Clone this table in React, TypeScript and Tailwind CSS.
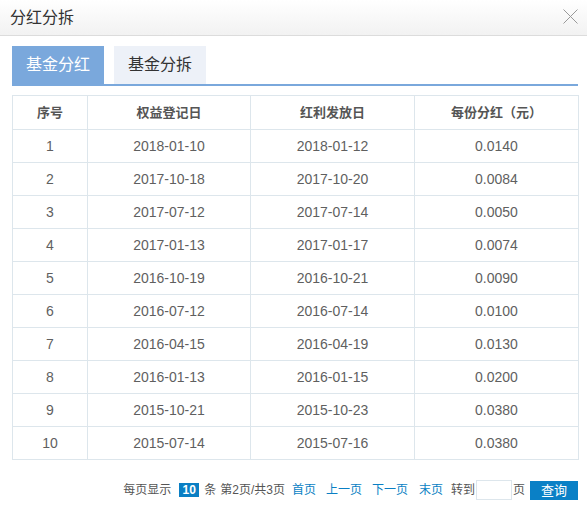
const rows = [
  ['1', '2018-01-10', '2018-01-12', '0.0140'],
  ['2', '2017-10-18', '2017-10-20', '0.0084'],
  ['3', '2017-07-12', '2017-07-14', '0.0050'],
  ['4', '2017-01-13', '2017-01-17', '0.0074'],
  ['5', '2016-10-19', '2016-10-21', '0.0090'],
  ['6', '2016-07-12', '2016-07-14', '0.0100'],
  ['7', '2016-04-15', '2016-04-19', '0.0130'],
  ['8', '2016-01-13', '2016-01-15', '0.0200'],
  ['9', '2015-10-21', '2015-10-23', '0.0380'],
  ['10', '2015-07-14', '2015-07-16', '0.0380'],
];

const headers = ['序号', '权益登记日', '红利发放日', '每份分红（元）'];

export default function App() {
  return (
    <div className="w-[587px] h-[505px] overflow-hidden bg-white font-['Liberation_Sans','Noto_Sans_CJK_SC',sans-serif]">
      <div className="h-[36px] border-b border-[#dcdcdc] bg-gradient-to-b from-white to-[#f2f2f2] flex items-center justify-between pl-[10px] pr-[9px]">
        <span className="text-[16px] text-[#333]">分红分拆</span>
        <svg width="15" height="15" viewBox="0 0 15 15" className="mb-[2px]">
          <path d="M0.5 0.5 L14.5 14.5 M14.5 0.5 L0.5 14.5" stroke="#999" strokeWidth="1" fill="none" />
        </svg>
      </div>

      <div className="pl-3 pr-[9px] pt-[10px]">
        <div className="flex gap-[10px] border-b-2 border-[#7aa8dc]">
          <button className="h-[38px] px-[14px] text-[16px] bg-[#7aa8dc] text-white">基金分红</button>
          <button className="h-[38px] px-[14px] text-[16px] bg-[#edf1f8] text-[#333]">基金分拆</button>
        </div>

        <table className="mt-[9px] w-[566px] border-collapse table-fixed text-center">
          <colgroup>
            <col className="w-[75px]" />
            <col className="w-[163px]" />
            <col className="w-[164px]" />
            <col className="w-[164px]" />
          </colgroup>
          <thead>
            <tr className="h-[34px]">
              {headers.map((h) => (
                <th key={h} className="border border-[#dde6ec] text-[13px] font-bold text-[#555]">
                  {h}
                </th>
              ))}
            </tr>
          </thead>
          <tbody>
            {rows.map((row) => (
              <tr key={row[0]} className="h-[33px]">
                {row.map((cell, i) => (
                  <td key={i} className="border border-[#dde6ec] text-[14px] text-[#5f5f5f]">
                    {cell}
                  </td>
                ))}
              </tr>
            ))}
          </tbody>
        </table>

        <div className="mt-[20px] flex items-center justify-end text-[12px] text-[#555] h-[20px]">
          <span>每页显示</span>
          <span className="ml-[8px] bg-[#0a7fc4] text-white font-bold h-[14px] leading-[14px] w-[20px] text-center">10</span>
          <span className="ml-[5px]">条</span>
          <span className="ml-[4px]">第2页/共3页</span>
          <a className="ml-[7px] text-[#0a7fc4]">首页</a>
          <a className="ml-[10px] text-[#0a7fc4]">上一页</a>
          <a className="ml-[10px] text-[#0a7fc4]">下一页</a>
          <a className="ml-[11px] text-[#0a7fc4]">末页</a>
          <span className="ml-[8px]">转到</span>
          <input className="ml-px w-[36px] h-[20px] border border-[#dde6ec] outline-none" />
          <span className="ml-px">页</span>
          <button className="ml-[5px] w-[48px] h-[19px] bg-[#0a80c6] text-white text-[13px] leading-[19px]">查询</button>
        </div>
      </div>
    </div>
  );
}
